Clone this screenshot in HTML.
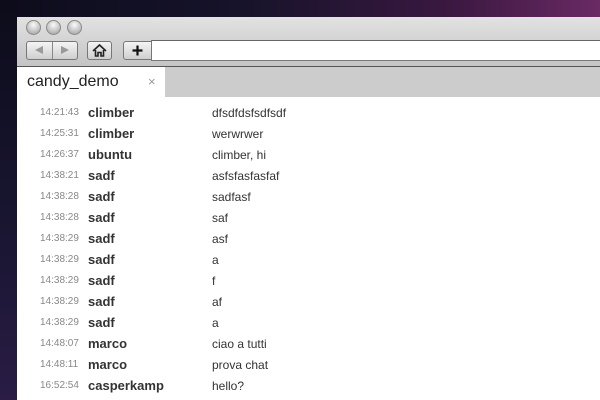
<!DOCTYPE html>
<html><head><style>
body{margin:0;width:600px;height:400px;overflow:hidden;position:relative;font-family:"Liberation Sans",Arial,sans-serif;
background:linear-gradient(90deg,#0d0c1c 0%,#16132a 40%,#3a1840 75%,#6a2a64 100%);}
.bgl{position:absolute;left:0;top:0;width:17px;height:400px;background:linear-gradient(180deg,#0c0c1a,#1a1633 60%,#2a1c45)}
.win{position:absolute;left:17px;top:17px;width:583px;height:383px;background:#fff}
.tb{position:absolute;left:0;top:0;width:583px;height:49px;background:linear-gradient(#e2e2e2,#c4c4c4);border-bottom:1px solid #555}
.dot{position:absolute;top:3px;width:13px;height:13px;border-radius:50%;background:radial-gradient(circle at 50% 30%,#fafafa,#b8b8b8 70%,#999);border:1px solid #8a8a8a}
.btn{position:absolute;top:24px;height:19px;border:1px solid #777;border-radius:3px;background:linear-gradient(#f4f4f4,#cfcfcf);box-sizing:border-box}
.addr{position:absolute;left:134px;top:23px;width:449px;height:21px;background:#fff;border-top:1px solid #666;border-bottom:1px solid #777;border-left:1px solid #777;box-sizing:border-box}
.tabs{position:absolute;left:0;top:50px;width:583px;height:30px;background:#cccccc}
.tab{position:absolute;left:0;top:0;width:148px;height:30px;background:#fff}
.rows{position:absolute;left:0;top:88px}
.r{position:absolute;height:21px;white-space:nowrap}
.t{position:absolute;left:23px;font-size:10px;color:#888;top:2px}
.n{position:absolute;left:71px;font-size:13px;font-weight:bold;color:#333}
.m{position:absolute;left:195px;font-size:12px;color:#333;top:1px}
</style></head><body>
<div class="bgl"></div>
<div class="win">
 <div class="tb">
  <div class="dot" style="left:9px"></div><div class="dot" style="left:29px"></div><div class="dot" style="left:50px"></div>
  <div class="btn" style="left:9px;width:52px"><div style="position:absolute;left:25px;top:0;width:1px;height:17px;background:#888"></div>
   <div style="position:absolute;left:8px;top:4px;width:0;height:0;border-top:4.5px solid transparent;border-bottom:4.5px solid transparent;border-right:8px solid #999"></div>
   <div style="position:absolute;left:34px;top:4px;width:0;height:0;border-top:4.5px solid transparent;border-bottom:4.5px solid transparent;border-left:8px solid #999"></div></div>
  <div class="btn" style="left:70px;width:25px"><svg width="23" height="17" viewBox="0 0 23 17"><path d="M5 9 L11.5 3 L18 9 M7.5 8 V14 H10 V10.5 H13 V14 H15.5 V8" fill="none" stroke="#222" stroke-width="1.6"/></svg></div>
  <div class="btn" style="left:106px;width:30px;border-radius:3px 0 0 3px"><svg width="28" height="17" viewBox="0 0 28 17"><path d="M13.5 3.5 V13.5 M8.5 8.5 H18.5" stroke="#111" stroke-width="2.2"/></svg></div>
  <div class="addr"></div>
 </div>
 <div class="tabs"><div class="tab">
  <span style="position:absolute;left:10px;top:6px;font-size:16px;color:#222">candy_demo</span>
  <span style="position:absolute;left:131px;top:7px;font-size:13px;color:#999">×</span></div></div>
 <div class="rows">
  <div class="r" style="top:0"><span class="t">14:21:43</span><span class="n">climber</span><span class="m">dfsdfdsfsdfsdf</span></div>
  <div class="r" style="top:21px"><span class="t">14:25:31</span><span class="n">climber</span><span class="m">werwrwer</span></div>
  <div class="r" style="top:42px"><span class="t">14:26:37</span><span class="n">ubuntu</span><span class="m">climber, hi</span></div>
  <div class="r" style="top:63px"><span class="t">14:38:21</span><span class="n">sadf</span><span class="m">asfsfasfasfaf</span></div>
  <div class="r" style="top:84px"><span class="t">14:38:28</span><span class="n">sadf</span><span class="m">sadfasf</span></div>
  <div class="r" style="top:105px"><span class="t">14:38:28</span><span class="n">sadf</span><span class="m">saf</span></div>
  <div class="r" style="top:126px"><span class="t">14:38:29</span><span class="n">sadf</span><span class="m">asf</span></div>
  <div class="r" style="top:147px"><span class="t">14:38:29</span><span class="n">sadf</span><span class="m">a</span></div>
  <div class="r" style="top:168px"><span class="t">14:38:29</span><span class="n">sadf</span><span class="m">f</span></div>
  <div class="r" style="top:189px"><span class="t">14:38:29</span><span class="n">sadf</span><span class="m">af</span></div>
  <div class="r" style="top:210px"><span class="t">14:38:29</span><span class="n">sadf</span><span class="m">a</span></div>
  <div class="r" style="top:231px"><span class="t">14:48:07</span><span class="n">marco</span><span class="m">ciao a tutti</span></div>
  <div class="r" style="top:252px"><span class="t">14:48:11</span><span class="n">marco</span><span class="m">prova chat</span></div>
  <div class="r" style="top:273px"><span class="t">16:52:54</span><span class="n">casperkamp</span><span class="m">hello?</span></div>
 </div>
</div>
</body></html>
